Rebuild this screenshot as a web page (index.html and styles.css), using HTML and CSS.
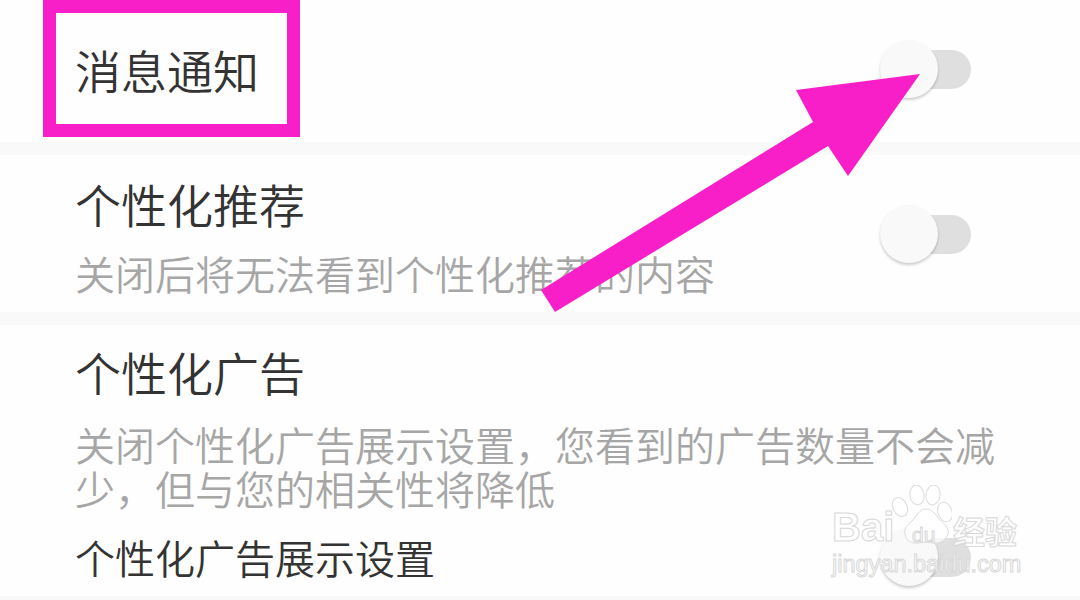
FILE: index.html
```html
<!DOCTYPE html>
<html lang="zh-CN">
<head>
<meta charset="utf-8">
<title>消息通知</title>
<link rel="stylesheet" href="styles.css">
</head>
<body>
<main class="page">
  <section class="row row-first">
    <h2 class="title">消息通知</h2>
    <div class="switch"><span class="knob"></span></div>
  </section>
  <section class="row row-second">
    <div class="copy">
      <h2 class="title">个性化推荐</h2>
      <p class="desc">关闭后将无法看到个性化推荐的内容</p>
    </div>
    <div class="switch switch-second"><span class="knob"></span></div>
  </section>
  <section class="block">
    <h2 class="title">个性化广告</h2>
    <p class="desc desc-wide">关闭个性化广告展示设置，您看到的广告数量不会减少，但与您的相关性将降低</p>
    <div class="subrow">
      <h3 class="subtitle">个性化广告展示设置</h3>
      <div class="switch"><span class="knob"></span></div>
    </div>
  </section>
</main>

<div class="highlight"></div>
<svg class="arrow" viewBox="0 0 1080 600" aria-hidden="true">
  <polygon points="920,74 796,90 813,122 541,290 555,312 828,146 848,176"/>
</svg>

<div class="mark">
  <svg class="paw" viewBox="0 0 60 60" aria-hidden="true">
    <ellipse cx="8" cy="22" rx="7" ry="10" transform="rotate(-25 8 22)"/>
    <ellipse cx="25" cy="10" rx="7" ry="10" transform="rotate(-8 25 10)"/>
    <ellipse cx="41" cy="10" rx="7" ry="10" transform="rotate(8 41 10)"/>
    <ellipse cx="53" cy="27" rx="7" ry="10" transform="rotate(-20 53 27)"/>
    <path d="M34 24C41 24 44 31 49 36C54 40 57 44 56 49C54 56 47 59 41 58C36 57 32 57 27 58C20 59 14 56 13 49C12 44 15 40 20 36C25 31 27 24 34 24Z"/>
  </svg>
  <div class="mark-top">
    <span class="mark-latin">Bai</span>
    <span class="mark-du">du</span>
    <span class="mark-cn">经验</span>
  </div>
  <div class="mark-url">jingyan.baidu.com</div>
</div>
</body>
</html>
```

FILE: styles.css
```css
* { box-sizing: border-box; margin: 0; padding: 0; }
html, body { width: 1080px; height: 600px; overflow: hidden; background: #fefefe; }
body { position: relative; font-family: "Noto Sans CJK SC", "Noto Sans", sans-serif; color: #333; }

.page { display: flex; flex-direction: column; height: 600px; border-bottom: 4px solid #f8f8f8; }

.row { flex: none; display: flex; justify-content: space-between; align-items: center; padding: 0 109px 0 75px; border-bottom: 13px solid #f9f9f9; }
.row-first { height: 155px; padding-bottom: 4px; }
.row-second { height: 170px; align-items: flex-start; }
.block { padding: 0 109px 0 75px; flex: 1; min-height: 0; }

.title { font-size: 46px; line-height: 60px; font-weight: 350; color: #333; }
.copy { padding-top: 18px; }
.desc { margin-top: 18px; font-size: 40px; line-height: 44px; font-weight: 350; color: #a6a6a6; }
.block .title { margin-top: 16px; }
.desc-wide { margin-top: 21px; width: 930px; }

.subrow { display: flex; justify-content: space-between; align-items: center; margin-top: 22px; }
.subtitle { font-size: 40px; line-height: 50px; font-weight: 350; color: #333; }

.switch { position: relative; width: 80px; height: 39px; border-radius: 20px; background: #dfdfdf; flex: none; }
.switch-second { margin-top: 60px; }
.knob { position: absolute; left: -11px; top: -10px; width: 58px; height: 58px; border-radius: 50%; background: #f9f9f9; box-shadow: 0 2px 3px rgba(0, 0, 0, .2); }

.highlight { position: absolute; left: 43px; top: 0; width: 257px; height: 137px; border: 13px solid #f81fc9; }
.arrow { position: absolute; left: 0; top: 0; width: 1080px; height: 600px; }
.arrow polygon { fill: #f81fc9; }

.mark { position: absolute; left: 832px; top: 485px; width: 192px; height: 92px; padding-top: 26px; }
.paw { position: absolute; left: 60px; top: 0; width: 60px; height: 60px; }
.paw ellipse, .paw path { fill: rgba(255, 255, 255, .7); stroke: #dcdcdc; stroke-width: 1; }
.mark-top { position: relative; display: flex; align-items: baseline; height: 36px; font-family: "Liberation Sans", sans-serif; color: rgba(255, 255, 255, .7); -webkit-text-stroke: 1px #d8d8d8; }
.mark-latin { width: 80px; font-size: 40px; line-height: 30px; font-weight: 700; }
.mark-du { width: 41px; font-size: 21px; line-height: 20px; transform: translateY(1px); }
.mark-cn { font-family: "Noto Sans CJK SC", sans-serif; font-size: 32px; line-height: 32px; font-weight: 700; transform: translateY(3px); }
.mark-url { position: relative; margin-top: 5px; font-family: "Liberation Sans", sans-serif; font-size: 23.5px; line-height: 24px; color: rgba(255, 255, 255, .65); -webkit-text-stroke: 1px #d8d8d8; white-space: nowrap; }
```
